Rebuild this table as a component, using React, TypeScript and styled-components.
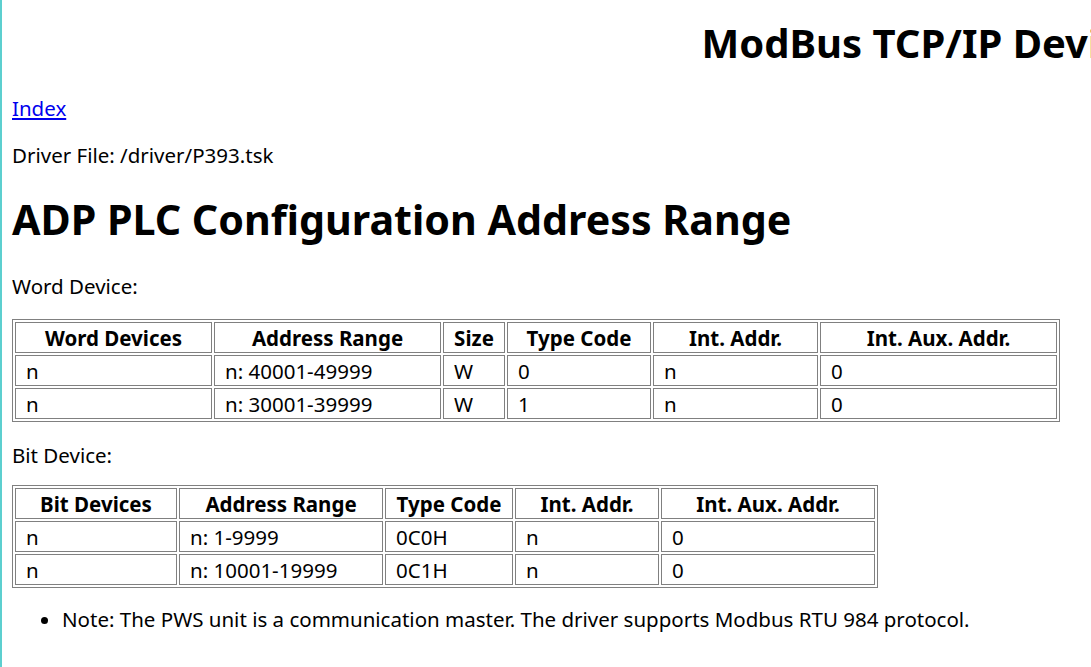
import React from "react";
import styled, { createGlobalStyle } from "styled-components";

const Global = createGlobalStyle`
  html, body { margin: 0; padding: 0; background: #fff; overflow: hidden; }
  body { font-family: "Noto Sans", "Open Sans", sans-serif; color: #000; }
`;

const Page = styled.div`
  border-left: 2px solid #5ccfcf;
  padding-left: 10px;
  min-height: 667px;
  box-sizing: border-box;
  width: 1091px;
`;

const Title = styled.h1`
  margin: 0;
  padding-top: 16px;
  width: 1956px;
  text-align: center;
  white-space: nowrap;
  font-size: 40px;
  line-height: 54px;
  font-weight: 700;
`;

const Para = styled.p<{ $top?: number }>`
  margin: ${(p) => p.$top ?? 16}px 0 0;
  font-size: 20.5px;
  line-height: 28px;
`;

const Link = styled.a`
  color: #0000ee;
  text-decoration: underline;
`;

const Heading = styled.h2`
  margin: 22px 0 0;
  font-size: 41.2px;
  line-height: 56px;
  font-weight: 700;
`;

const Table = styled.table<{ $top: number }>`
  margin-top: ${(p) => p.$top}px;
  border: 1px solid #808080;
  border-spacing: 2px;
  font-size: 20.5px;
  table-layout: fixed;
`;

const Th = styled.th<{ $w: number }>`
  width: ${(p) => p.$w}px;
  border: 1px solid #808080;
  padding: 0 1px;
  height: 29px;
  font-weight: 700;
  text-align: center;
  line-height: 26px;
`;

const Td = styled.td`
  border: 1px solid #808080;
  padding: 0 10px;
  height: 29px;
  line-height: 26px;
`;

const List = styled.ul`
  margin: 17px 0 0;
  padding-left: 50px;
  font-size: 20.5px;
  line-height: 28px;
`;

const wordCols = [
  { t: "Word Devices", w: 193 },
  { t: "Address Range", w: 223 },
  { t: "Size", w: 58 },
  { t: "Type Code", w: 140 },
  { t: "Int. Addr.", w: 161 },
  { t: "Int. Aux. Addr.", w: 233 },
];
const wordRows = [
  ["n", "n: 40001-49999", "W", "0", "n", "0"],
  ["n", "n: 30001-39999", "W", "1", "n", "0"],
];
const bitCols = [
  { t: "Bit Devices", w: 158 },
  { t: "Address Range", w: 200 },
  { t: "Type Code", w: 124 },
  { t: "Int. Addr.", w: 140 },
  { t: "Int. Aux. Addr.", w: 210 },
];
const bitRows = [
  ["n", "n: 1-9999", "0C0H", "n", "0"],
  ["n", "n: 10001-19999", "0C1H", "n", "0"],
];

function DataTable({
  cols,
  rows,
  top,
}: {
  cols: { t: string; w: number }[];
  rows: string[][];
  top: number;
}) {
  return (
    <Table $top={top}>
      <tbody>
        <tr>
          {cols.map((c) => (
            <Th key={c.t} $w={c.w}>{c.t}</Th>
          ))}
        </tr>
        {rows.map((r, i) => (
          <tr key={i}>
            {r.map((v, j) => (
              <Td key={j}>{v}</Td>
            ))}
          </tr>
        ))}
      </tbody>
    </Table>
  );
}

export default function App() {
  return (
    <>
      <Global />
      <Page>
        <Title>ModBus TCP/IP Device Driver</Title>
        <Para $top={24}>
          <Link href="#">Index</Link>
        </Para>
        <Para $top={19}>Driver File: /driver/P393.tsk</Para>
        <Heading>ADP PLC Configuration Address Range</Heading>
        <Para $top={25}>Word Device:</Para>
        <DataTable cols={wordCols} rows={wordRows} top={19} />
        <Para $top={19}>Bit Device:</Para>
        <DataTable cols={bitCols} rows={bitRows} top={16} />
        <List>
          <li>Note: The PWS unit is a communication master. The driver supports Modbus RTU 984 protocol.</li>
        </List>
      </Page>
    </>
  );
}
